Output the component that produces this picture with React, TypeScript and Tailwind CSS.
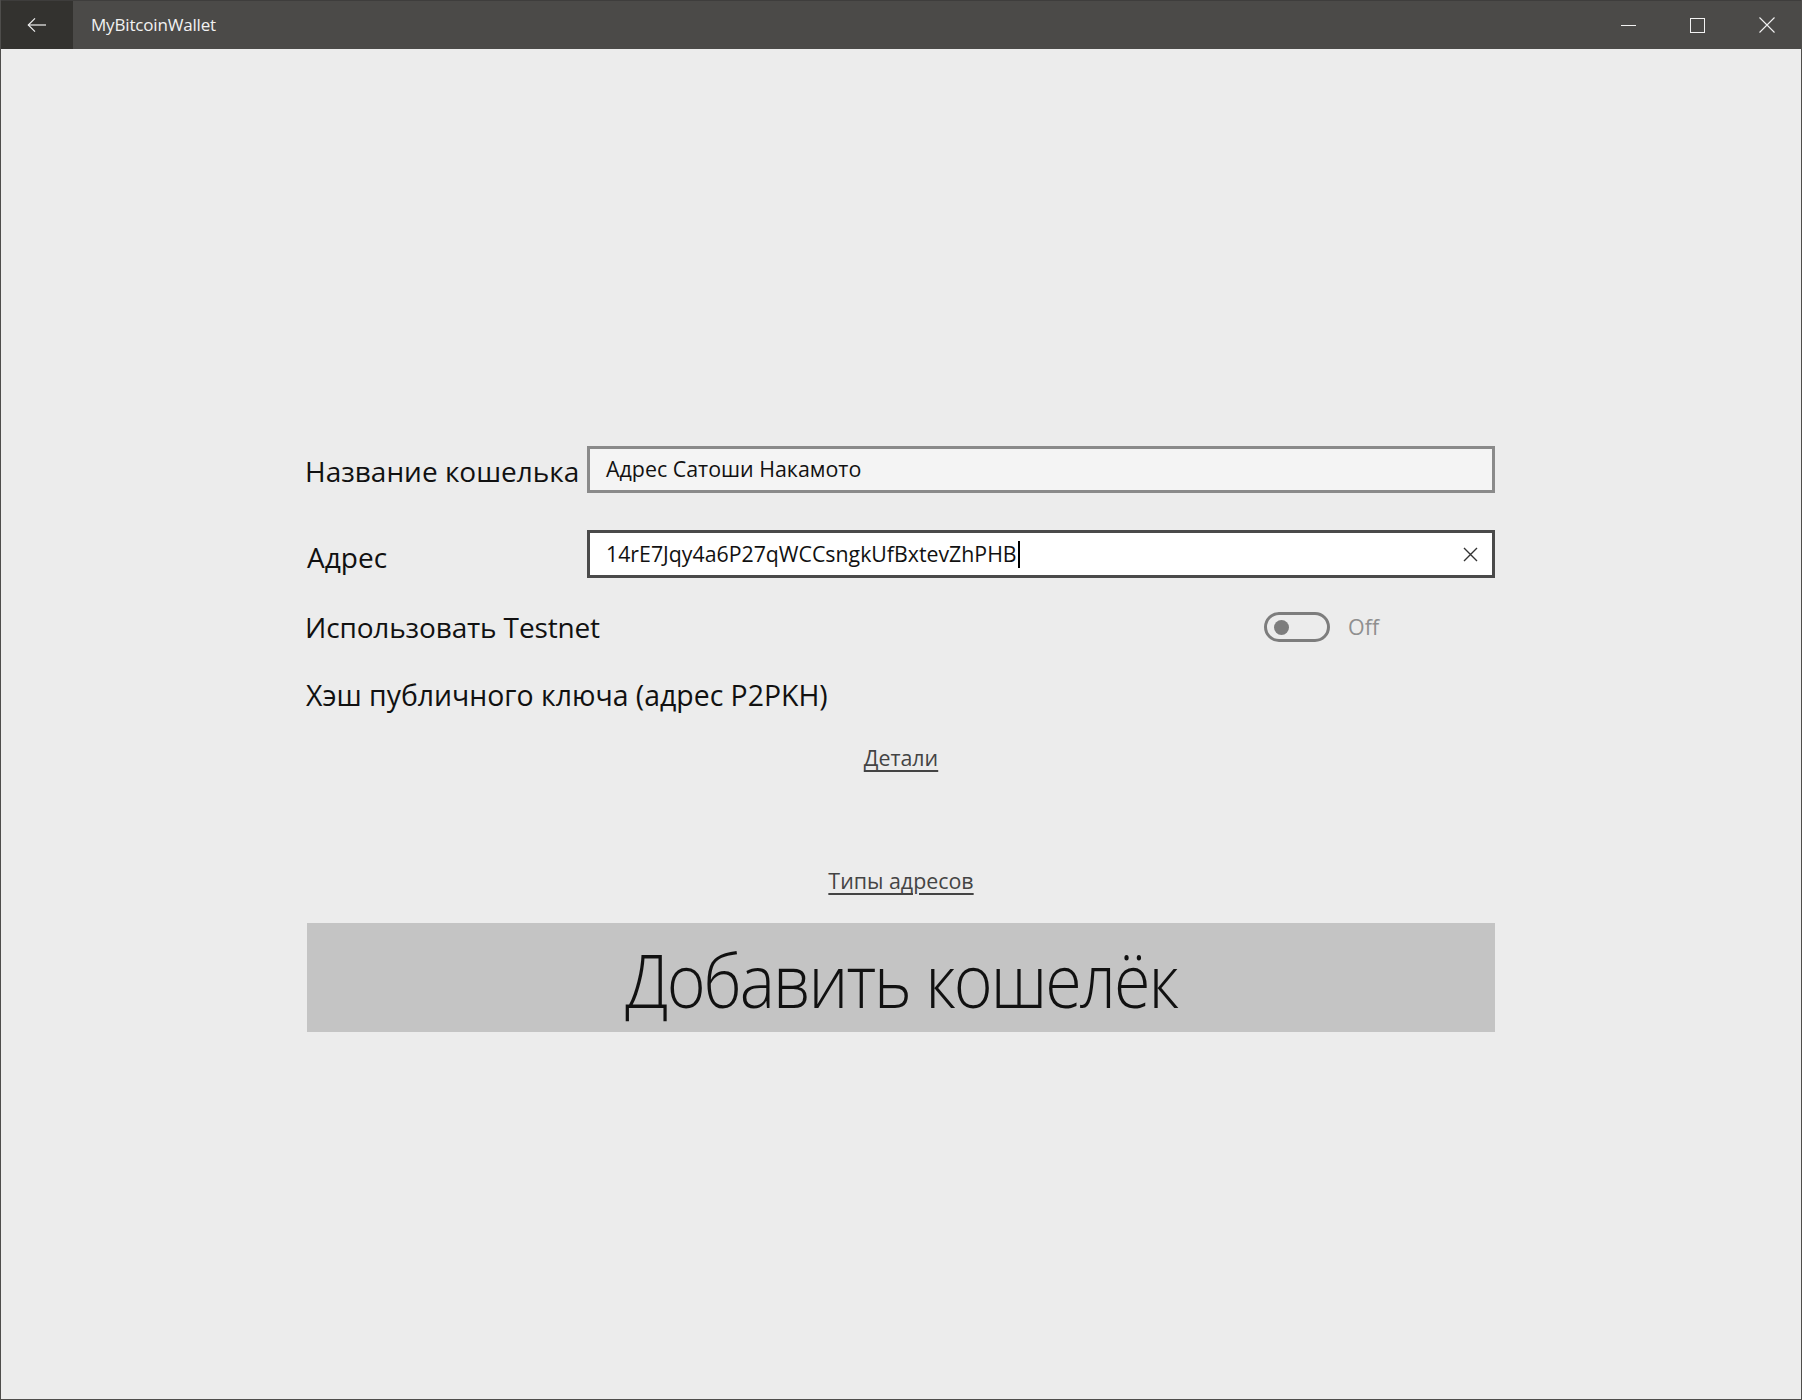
import React from "react";

export default function App() {
  return (
    <div className="w-[1802px] h-[1400px] flex flex-col border border-t-0 border-[#4e4d4b] bg-[#ececec] font-['Open_Sans','Noto_Sans',sans-serif] overflow-hidden">
      {/* Title bar */}
      <div className="h-[49px] flex items-stretch bg-[#4b4a48] border-t border-[#3e3d3c] shrink-0">
        <div className="w-[72px] bg-[#33322f] flex items-center justify-center">
          <svg width="20" height="16" viewBox="0 0 20 16" fill="none" stroke="#f0f0f0" strokeWidth="1.2">
            <path d="M19 8H1.5" />
            <path d="M8 1.3L1.3 8L8 14.7" />
          </svg>
        </div>
        <div className="flex items-center pl-[18px] text-[17px] text-[#f2f2f2] tracking-[-0.01em]">
          MyBitcoinWallet
        </div>
        <div className="ml-auto flex">
          <div className="w-[69px] flex items-center justify-center">
            <div className="w-[15px] h-px bg-[#f2f2f2]" />
          </div>
          <div className="w-[69px] flex items-center justify-center">
            <div className="w-[15px] h-[15px] border border-[#f2f2f2]" />
          </div>
          <div className="w-[69px] flex items-center justify-center">
            <svg width="16" height="16" viewBox="0 0 16 16" stroke="#f2f2f2" strokeWidth="1.1">
              <path d="M0.5 0.5L15.5 15.5M15.5 0.5L0.5 15.5" />
            </svg>
          </div>
        </div>
      </div>

      {/* Content */}
      <div className="flex-1 flex flex-col">
        <div className="w-[1188px] mx-auto pt-[397px] flex flex-col text-[#111]">
          {/* Row 1 */}
          <div className="flex items-center h-[47px]">
            <div className="w-[280px] shrink-0 pt-[3px]">
              <span className="text-[28px] -ml-[2px] block">Название кошелька</span>
            </div>
            <div className="flex-1 h-[47px] border-[3px] border-[#8a8a8a] bg-[#f4f4f4] flex items-center pl-[16px] text-[21.4px]">
              Адрес Сатоши Накамото
            </div>
          </div>
          {/* Row 2 */}
          <div className="flex items-center h-[48px] mt-[37px]">
            <div className="w-[280px] shrink-0 text-[28px] pt-[5px]">Адрес</div>
            <div className="flex-1 h-[48px] border-[3px] border-[#4a4a4a] bg-white flex items-center pl-[16px] pr-[14px] text-[21.3px]">
              <span>14rE7Jqy4a6P27qWCCsngkUfBxtevZhPHB</span>
              <span className="w-[2px] h-[27px] bg-black ml-[1px]" />
              <svg className="ml-auto" width="15" height="15" viewBox="0 0 15 15" stroke="#333" strokeWidth="1.4">
                <path d="M1 1L14 14M14 1L1 14" />
              </svg>
            </div>
          </div>
          {/* Row 3 */}
          <div className="flex items-center h-[30px] mt-[34px]">
            <div className="flex-1 text-[28px] -ml-[2px] tracking-[-0.005em]">Использовать Testnet</div>
            <div className="w-[231px] flex items-center">
              <div className="w-[66px] h-[30px] rounded-full border-[3px] border-[#7d7d7d] flex items-center pl-[7px]">
                <div className="w-[15px] h-[15px] rounded-full bg-[#7d7d7d]" />
              </div>
              <span className="ml-[18px] text-[21.4px] text-[#8f8f8f]">Off</span>
            </div>
          </div>
          {/* Row 4 */}
          <div className="h-[40px] mt-[33px] flex items-center text-[28.4px] -ml-[1px]">
            Хэш публичного ключа (адрес P2PKH)
          </div>
          <div className="h-[30px] mt-[28px] flex items-center justify-center text-[21.4px] text-[#444] underline underline-offset-[4px]">
            Детали
          </div>
          <div className="h-[30px] mt-[93px] flex items-center justify-center text-[21.4px] text-[#444] underline underline-offset-[4px]">
            Типы адресов
          </div>
          <div className="h-[109px] mt-[27px] bg-[#c4c4c4] flex items-center justify-center">
            <span className="text-[73px] font-light text-[#111] leading-none tracking-[-0.03em] pt-[4px] scale-x-[0.91]">Добавить кошелёк</span>
          </div>
        </div>
      </div>
    </div>
  );
}
